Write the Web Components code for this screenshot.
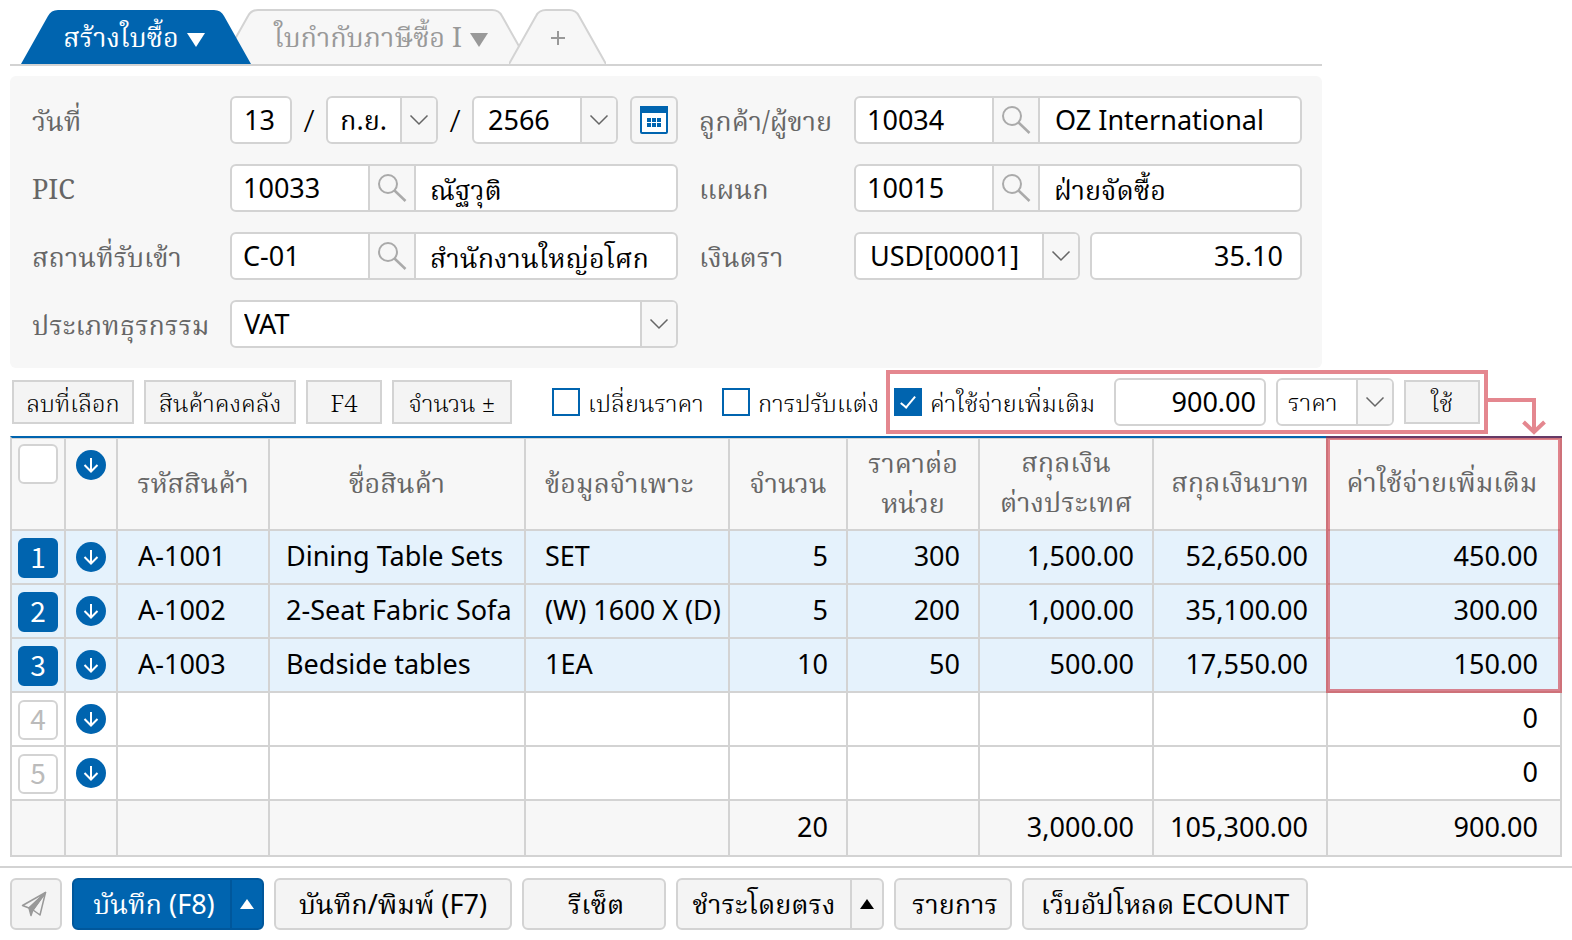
<!DOCTYPE html>
<html lang="th">
<head>
<meta charset="utf-8">
<title>สร้างใบซื้อ</title>
<style>
  body {
    --blue: #0064af;
    --line: #d3d3d3;
    --soft: #f7f7f7;
    --face: #f4f4f4;
    --mark: #e4878f;
    --label: #666;
    --thai: "Noto Serif Thai", "Noto Serif", "Liberation Serif", serif;
    --value: "Noto Sans", "Noto Serif Thai", "Liberation Serif", serif;
    margin: 0;
    background: #fff;
    color: #000;
    font: 380 27px/40px var(--value);
  }
</style>
</head>
<body>
<purchase-page></purchase-page>

<script>
const base = `
  *, *::before, *::after { box-sizing: border-box; }
  :host { display: block; }
  button, input, select { display: block; font: inherit; color: inherit; margin: 0; padding: 0; border: 0; border-radius: 0; background: none; outline: 0; min-width: 0; }
  button { cursor: pointer; }
  svg { display: block; flex: none; }
`;

function define(name, css, render) {
  customElements.define(name, class extends HTMLElement {
    constructor() {
      super();
      const t = document.createElement('template');
      t.innerHTML = `<style>${base}${css}</style>${render(this)}`;
      this.attachShadow({ mode: 'open' }).append(t.content.cloneNode(true));
    }
  });
}
const at = (el, n) => el.getAttribute(n) || '';
const isThai = s => /[\u0e00-\u0e7f]/.test(s);
const chevron = `<svg width="20" height="12" viewBox="0 0 20 12"><path d="M1.5 1.5 10 10 18.500 1.500" fill="none" stroke="#666" stroke-width="1.500"/></svg>`;

/* one tab of the strip, with slanted sides */
define('tab-item', `
  :host { position: relative; z-index: 1; flex: none; height: 56px; }
  :host([kind=idle]) { z-index: 0; color: #999; margin-left: -30px; }
  :host([kind=add]) { z-index: 1; color: #999; margin-left: -20px; }
  button { display: flex; align-items: center; justify-content: center; gap: 8px; width: 100%; height: 100%; position: relative; padding-top: 8px; font: 400 27px/40px var(--thai); white-space: nowrap; color: inherit; }
  :host([kind=active]) button { color: #fff; padding-right: 4px; }
  :host([kind=idle]) button { padding-left: 12px; }
  :host([kind=add]) button { padding-top: 4px; }
  .shape { position: absolute; inset: 0; }
`, el => {
  const kind = at(el, 'kind');
  const w = { active: 230, idle: 308, add: 97 }[kind];
  const path = `M0 56 L27 8 Q30 2 37 2 H${w - 37} Q${w - 30} 2 ${w - 27} 8 L${w} 56`;
  const paint = kind === 'active' ? 'fill="#0064af"' : 'fill="#f7f7f7" stroke="#d3d3d3" stroke-width="2"';
  const mark = kind === 'add'
    ? '<svg width="16" height="16" viewBox="0 0 16 16"><path d="M8 1V15M1 8H15" stroke="#999" stroke-width="2"/></svg>'
    : '<svg width="18" height="14" viewBox="0 0 18 14"><path d="M0 0H18L9 14Z" fill="currentColor"/></svg>';
  return `<svg class="shape" width="${w}" height="56" viewBox="0 0 ${w} 56"><path d="${path}" ${paint}/></svg>
    <button style="width:${w}px" type="button"${kind === 'add' ? ' aria-label="เพิ่มแท็บ"' : ''}><slot></slot>${mark}</button>`;
});

define('tab-strip', `
  :host { display: flex; max-width: 1312px; height: 58px; padding-left: 11px; border-bottom: 2px solid var(--line); }
`, () => `
  <tab-item kind="active">สร้างใบซื้อ</tab-item>
  <tab-item kind="idle">ใบกำกับภาษีซื้อ I</tab-item>
  <tab-item kind="add"></tab-item>`);

/* plain bordered text box */
define('text-box', `
  :host { height: 48px; }
  input { width: 100%; height: 100%; border: 2px solid var(--line); border-radius: 6px; background: #fff; padding: 0 12px 2px; }
  :host([align=end]) input { text-align: right; padding-right: 17px; }
  :host([align=tight]) input { text-align: right; padding-right: 8px; }
`, el => `<input type="text" aria-label="${at(el, 'name')}" value="${at(el, 'value')}">`);

/* drop-down with its arrow in a shaded cell */
define('select-box', `
  :host { display: grid; grid-template-columns: 1fr 36px; height: 48px; border: 2px solid var(--line); border-radius: 6px; background: #fff; overflow: hidden; }
  select { appearance: none; grid-area: 1 / 1 / 2 / 3; width: 100%; height: 44px; padding: 0 40px 0 12px; }
  :host([wide]) select { padding-left: 14px; }
  :host([small]) select { font-size: 24px; font-weight: 350; padding-left: 10px; }
  span { grid-area: 1 / 2; display: grid; place-items: center; background: var(--soft); border-left: 2px solid var(--line); pointer-events: none; z-index: 1; }
`, el => `<select aria-label="${at(el, 'name')}"><option>${at(el, 'value')}</option></select><span>${chevron}</span>`);

/* code, search button and name in one box */
define('lookup-box', `
  :host { display: grid; grid-template-columns: 136px 48px minmax(0, 1fr); height: 48px; border: 2px solid var(--line); border-radius: 6px; background: #fff; overflow: hidden; }
  input { width: 100%; height: 44px; padding: 0 11px 2px; }
  .name { padding: 0 15px 2px; }
  .thai { padding: 8px 14px 0; }
  button { display: grid; place-items: center; background: var(--soft); border: solid var(--line); border-width: 0 2px; }
`, el => `
  <input type="text" aria-label="${at(el, 'name')}" value="${at(el, 'code')}">
  <button type="button" aria-label="ค้นหา"><svg width="30" height="30" viewBox="0 0 30 30"><g fill="none" stroke="#aaa" stroke-width="2"><circle cx="11" cy="11" r="9"/><path d="M17.500 17.500 28.500 28" stroke-width="2.500"/></g></svg></button>
  <input class="${isThai(at(el, 'text')) ? 'thai' : 'name'}" type="text" aria-label="${at(el, 'name')}" value="${at(el, 'text')}">`);

define('date-box', `
  :host { display: flex; align-items: center; }
  .day { width: 62px; flex: none; }
  .month { width: 112px; flex: none; }
  .year { flex: 1; }
  i { font-style: normal; font-weight: 300; width: 34px; flex: none; text-align: center; font-size: 32px; }
  button { width: 48px; height: 48px; margin-left: 12px; flex: none; display: grid; place-items: center; border: 2px solid var(--line); border-radius: 6px; background: var(--soft); }
`, () => `
  <text-box class="day" name="วัน" value="13"></text-box><i>/</i>
  <select-box class="month" name="เดือน" value="ก.ย."></select-box><i>/</i>
  <select-box class="year" wide name="ปี" value="2566"></select-box>
  <button type="button" aria-label="ปฏิทิน"><svg width="28" height="28" viewBox="0 0 28 28"><rect x="1" y="1" width="26" height="26" rx="1" fill="#fff" stroke="#0064af" stroke-width="2"/><path d="M0 0H28V7H0Z" fill="#0064af"/><path d="M7 12h4v4H7zM12 12h4v4h-4zM17 12h4v4h-4zM7 17h4v4H7zM12 17h4v4h-4zM17 17h4v4h-4z" fill="#0064af"/></svg></button>`);

define('form-panel', `
  :host { display: grid; grid-template-columns: 198px minmax(0, 1fr) 21px 155px minmax(0, 1fr); row-gap: 20px; max-width: 1312px; margin-top: 10px; padding: 20px 20px 20px 22px; border-radius: 6px; background: var(--soft); box-sizing: border-box; }
  .l { padding-top: 8px; font: 400 27px/40px var(--thai); color: var(--label); white-space: nowrap; }
  .r { grid-column: 4; }
  .pair { display: grid; grid-template-columns: 226px minmax(0, 1fr); gap: 10px; }
`, () => `
  <span class="l">วันที่</span><date-box></date-box>
  <span class="l r">ลูกค้า/ผู้ขาย</span><lookup-box name="ลูกค้า/ผู้ขาย" code="10034" text="OZ International"></lookup-box>
  <span class="l">PIC</span><lookup-box name="PIC" code="10033" text="ณัฐวุติ"></lookup-box>
  <span class="l r">แผนก</span><lookup-box name="แผนก" code="10015" text="ฝ่ายจัดซื้อ"></lookup-box>
  <span class="l">สถานที่รับเข้า</span><lookup-box name="สถานที่รับเข้า" code="C-01" text="สำนักงานใหญ่อโศก"></lookup-box>
  <span class="l r">เงินตรา</span><div class="pair"><select-box wide name="เงินตรา" value="USD[00001]"></select-box><text-box align="end" name="อัตรา" value="35.10"></text-box></div>
  <span class="l">ประเภทธุรกรรม</span><select-box name="ประเภทธุรกรรม" value="VAT"></select-box>`);

define('flat-button', `
  :host { height: 44px; flex: none; }
  button { width: 100%; height: 100%; padding-top: 8px; border: 2px solid var(--line); background: var(--face); font: 350 24px/32px var(--thai); white-space: nowrap; }
`, () => `<button type="button"><slot></slot></button>`);

define('check-option', `
  label { display: flex; align-items: center; gap: 8px; font: 350 24px/40px var(--thai); white-space: nowrap; }
  span { padding-top: 8px; }
  input { appearance: none; flex: none; width: 28px; height: 28px; border: 2px solid var(--blue); background: #fff; display: grid; place-items: center; }
  input:checked { background: var(--blue); }
  input:checked::before { content: ""; width: 8px; height: 15px; margin-bottom: 4px; border: solid #fff; border-width: 0 2px 2px 0; rotate: 40deg; }
`, el => `<label><input type="checkbox"${el.hasAttribute('on') ? ' checked' : ''}><span><slot></slot></span></label>`);

define('action-bar', `
  :host { display: flex; align-items: center; gap: 10px; height: 64px; margin-top: 2px; padding-left: 2px; }
  .a { width: 122px; } .b { width: 152px; } .c { width: 76px; } .d { width: 120px; }
  .e { width: 160px; margin-left: 30px; } .f { width: 154px; }
  .group { display: flex; align-items: center; gap: 10px; width: 602px; height: 64px; flex: none; padding: 0 4px; border: 4px solid var(--mark); }
  .group check-option { flex: 1; }
  .amount { width: 152px; } .basis { width: 118px; }
  .arrow { margin-left: -10px; }
`, () => `
  <flat-button class="a">ลบที่เลือก</flat-button>
  <flat-button class="b">สินค้าคงคลัง</flat-button>
  <flat-button class="c">F4</flat-button>
  <flat-button class="d">จำนวน ±</flat-button>
  <check-option class="e">เปลี่ยนราคา</check-option>
  <check-option class="f">การปรับแต่ง</check-option>
  <div class="group">
    <check-option on>ค่าใช้จ่ายเพิ่มเติม</check-option>
    <text-box class="amount" align="tight" name="ค่าใช้จ่ายเพิ่มเติม" value="900.00"></text-box>
    <select-box class="basis" small name="เกณฑ์" value="ราคา"></select-box>
    <flat-button class="c">ใช้</flat-button>
  </div>
  <svg class="arrow" width="60" height="66" viewBox="0 0 60 66"><path d="M0 31H46V62M35.500 53 46 63 56.500 53" fill="none" stroke="#e4878f" stroke-width="4"/></svg>`);

const down = `<button class="down" type="button" aria-label="แทรก"><svg width="30" height="30" viewBox="0 0 30 30"><circle cx="15" cy="15" r="15" fill="#0064af"/><path d="M15 8V21M8.500 15 15 21.500 21.500 15" fill="none" stroke="#fff" stroke-width="2"/></svg></button>`;
const rows = [
  ['A-1001', 'Dining Table Sets', 'SET', '5', '300', '1,500.00', '52,650.00', '450.00'],
  ['A-1002', '2-Seat Fabric Sofa', '(W) 1600 X (D)', '5', '200', '1,000.00', '35,100.00', '300.00'],
  ['A-1003', 'Bedside tables', '1EA', '10', '50', '500.00', '17,550.00', '150.00'],
  ['', '', '', '', '', '', '', '0'],
  ['', '', '', '', '', '', '', '0'],
];
const cells = r => r.map((c, i) => `<td class="${i > 2 ? 'n' : 't'}">${c}</td>`).join('');

define('item-grid', `
  :host { position: relative; margin-top: 2px; }
  table { width: 100%; table-layout: fixed; border-collapse: separate; border-spacing: 0; border-left: 2px solid var(--line); border-top: 2px solid var(--blue); }
  th, td { padding: 0; border: solid var(--line); border-width: 0 2px 2px 0; white-space: nowrap; text-align: left; vertical-align: middle; }
  th { height: 93px; padding-top: 4px; background: var(--soft); color: var(--label); font: 400 27px/40px var(--thai); text-align: center; box-shadow: inset 0 1px var(--line); }
  th:nth-child(n+8) { padding-top: 2px; }
  th:last-child { padding-right: 4px; }
  th:nth-child(-n+2) { vertical-align: top; padding-top: 6px; }
  th:nth-child(2) { padding-top: 12px; }
  td { height: 54px; }
  .t, .n { padding-bottom: 2px; }
  tfoot td { height: 56px; background: var(--soft); }
  .on td { background: #e5f2fc; }
  td:first-child { padding-top: 2px; }
  td:nth-child(3) { padding-left: 20px; }
  td:nth-child(4) { padding-left: 16px; }
  td:nth-child(5), th:nth-child(5) { padding-left: 19px; text-align: left; }
  td.n { text-align: right; padding-right: 18px; }
  td.n:last-child { padding-right: 22px; }
  .all, .no { display: block; width: 40px; height: 40px; margin: 0 auto; border: 2px solid var(--line); border-radius: 6px; background: #fff; }
  .all { appearance: none; }
  .no { padding-bottom: 4px; color: #bbb; font: 28px/32px "Noto Sans CJK JP", sans-serif; text-align: center; }
  .on .no { background: var(--blue); border-color: var(--blue); color: #fff; }
  .down { display: block; width: 30px; height: 30px; margin: 0 auto; }
  .frame { position: absolute; top: 0; right: 0; width: 236px; height: 257px; border: 4px solid rgba(202, 15, 31, .5); pointer-events: none; }
`, () => `
  <table>
    <colgroup><col style="width:54px"><col style="width:52px"><col style="width:152px"><col><col style="width:204px"><col style="width:118px"><col style="width:132px"><col style="width:174px"><col style="width:174px"><col style="width:234px"></colgroup>
    <thead><tr>
      <th><input class="all" type="checkbox" aria-label="เลือกทั้งหมด"></th><th>${down}</th>
      <th>รหัสสินค้า</th><th>ชื่อสินค้า</th><th>ข้อมูลจำเพาะ</th><th>จำนวน</th>
      <th>ราคาต่อ<br>หน่วย</th><th>สกุลเงิน<br>ต่างประเทศ</th><th>สกุลเงินบาท</th><th>ค่าใช้จ่ายเพิ่มเติม</th>
    </tr></thead>
    <tbody>${rows.map((r, i) => `<tr class="${i < 3 ? 'on' : ''}"><td><button class="no" type="button">${i + 1}</button></td><td>${down}</td>${cells(r)}</tr>`).join('')}</tbody>
    <tfoot><tr><td></td><td></td>${cells(['', '', '', '20', '', '3,000.00', '105,300.00', '900.00'])}</tr></tfoot>
  </table>
  <div class="frame"></div>`);

/* raised footer button, with an optional menu part */
define('foot-button', `
  :host { display: flex; box-sizing: border-box; height: 52px; flex: none; border: 2px solid var(--line); border-radius: 6px; background: var(--face); overflow: hidden; }
  :host([primary]) { background: var(--blue); border-color: #00579b; color: #fff; }
  button { display: flex; flex: 1; align-items: center; justify-content: center; white-space: nowrap; }
  :host([nudge]) button:first-of-type { padding-left: 4px; }
  .menu { flex: 0 0 32px; border-left: 2px solid var(--line); }
  :host([primary]) .menu { border-color: #00579b; }
`, el => `<button type="button"${el.hasAttribute('name') ? ` aria-label="${at(el, 'name')}"` : ''}><slot></slot></button>${el.hasAttribute('menu') ? '<button class="menu" type="button" aria-label="เพิ่มเติม"><svg width="14" height="10" viewBox="0 0 14 10"><path d="M0 10 7 0 14 10Z" fill="currentColor"/></svg></button>' : ''}`);

define('foot-bar', `
  :host { display: flex; gap: 10px; margin-top: 9px; padding: 10px; border-top: 2px solid var(--line); }
  .a { width: 52px; } .b { width: 192px; } .c { width: 238px; } .d { width: 144px; } .e { width: 208px; } .f { width: 118px; } .g { width: 286px; }
  .a svg { margin-right: 4px; }
`, () => `
  <foot-button class="a" name="ส่ง"><svg width="26" height="26" viewBox="0 0 26 26"><g stroke="#999" stroke-width="1.500" stroke-linejoin="round"><path d="M24.500 1.500 1.500 14.500 8 17 24.500 1.500 12 19 19 24Z" fill="none"/><path d="M8 17 24.500 1.500 12 18.500 10 24.500Z" fill="#999"/></g></svg></foot-button>
  <foot-button class="b" primary menu nudge>บันทึก (F8)</foot-button>
  <foot-button class="c">บันทึก/พิมพ์ (F7)</foot-button>
  <foot-button class="d" nudge>รีเซ็ต</foot-button>
  <foot-button class="e" menu>ชำระโดยตรง</foot-button>
  <foot-button class="f" nudge>รายการ</foot-button>
  <foot-button class="g">เว็บอัปโหลด ECOUNT</foot-button>`);

define('purchase-page', `
  main { padding: 8px 10px 0; }
`, () => `
  <main>
    <tab-strip></tab-strip>
    <form-panel></form-panel>
    <action-bar></action-bar>
    <item-grid></item-grid>
  </main>
  <foot-bar></foot-bar>`);
</script>
</body>
</html>
